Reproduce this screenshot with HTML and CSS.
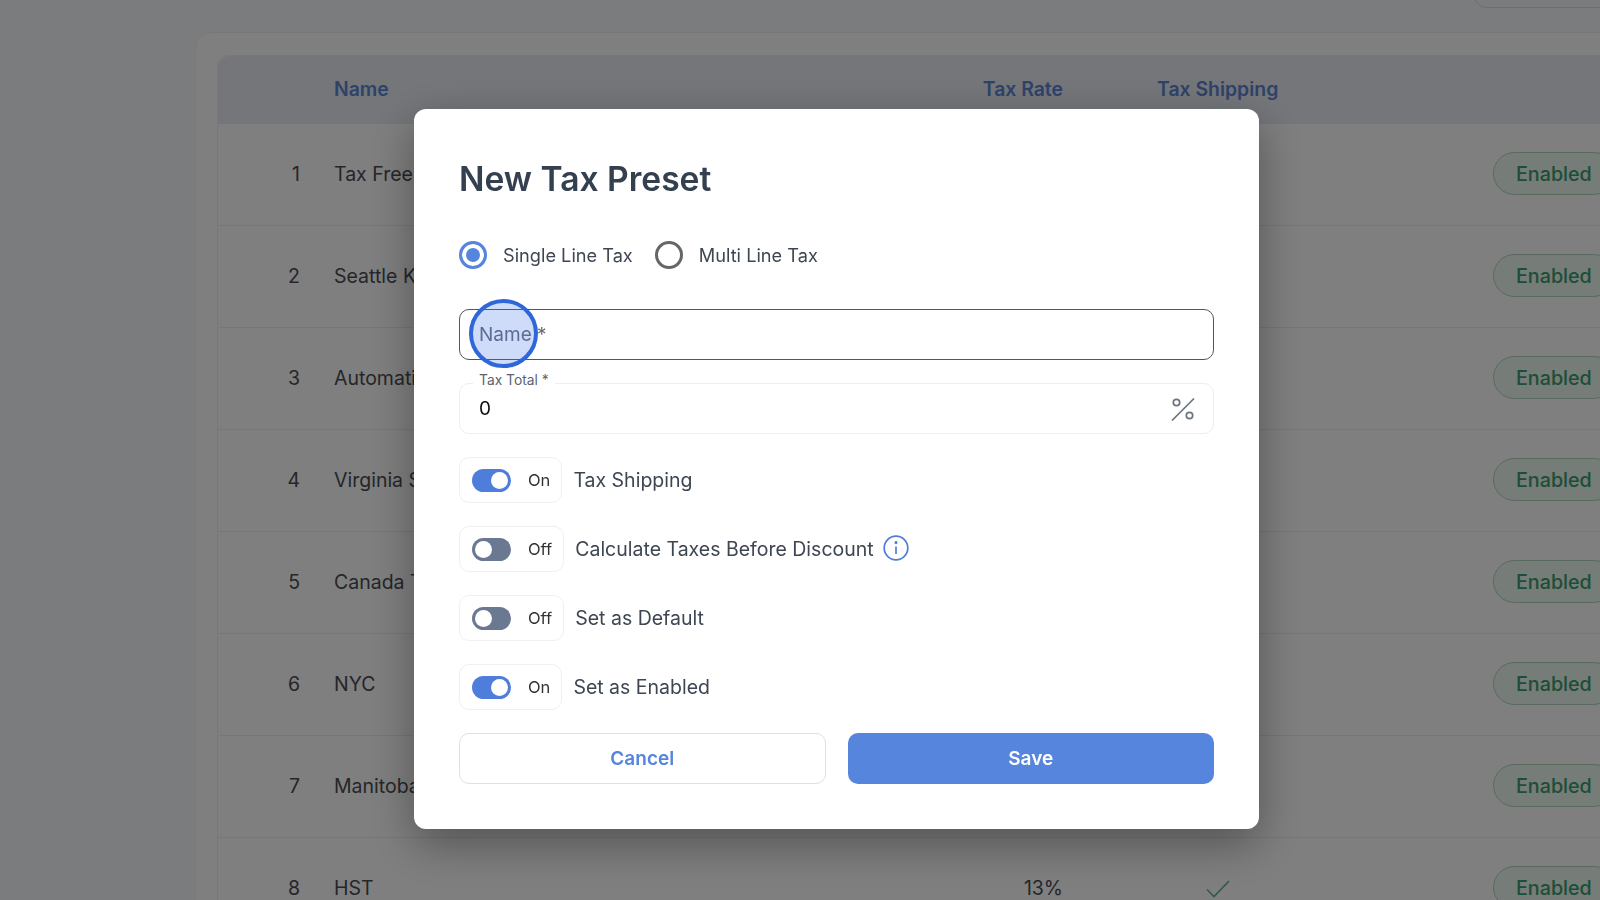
FILE: index.html
```html
<!DOCTYPE html>
<html lang="en">
<head>
    <meta charset="UTF-8">
    <title>Tax Presets</title>
    <link rel="stylesheet" href="styles.css">
</head>
<body>
    <main class="page">
        <div class="topbar"><div class="top-pill"></div></div>
        <section class="card">
            <div class="table">
                <div class="row head">
                    <div class="num"></div>
                    <div class="name">Name</div>
                    <div class="rate">Tax Rate</div>
                    <div class="ship">Tax Shipping</div>
                    <div class="status"></div>
                </div>
                <div class="row">
                    <div class="num">1</div><div class="name">Tax Free</div><div class="rate"></div><div class="ship"></div>
                    <div class="status"><span class="pill">Enabled</span></div>
                </div>
                <div class="row">
                    <div class="num">2</div><div class="name">Seattle King County</div><div class="rate"></div><div class="ship"></div>
                    <div class="status"><span class="pill">Enabled</span></div>
                </div>
                <div class="row">
                    <div class="num">3</div><div class="name">Automatic</div><div class="rate"></div><div class="ship"></div>
                    <div class="status"><span class="pill">Enabled</span></div>
                </div>
                <div class="row">
                    <div class="num">4</div><div class="name">Virginia State</div><div class="rate"></div><div class="ship"></div>
                    <div class="status"><span class="pill">Enabled</span></div>
                </div>
                <div class="row">
                    <div class="num">5</div><div class="name">Canada Tax</div><div class="rate"></div><div class="ship"></div>
                    <div class="status"><span class="pill">Enabled</span></div>
                </div>
                <div class="row">
                    <div class="num">6</div><div class="name">NYC</div><div class="rate"></div><div class="ship"></div>
                    <div class="status"><span class="pill">Enabled</span></div>
                </div>
                <div class="row">
                    <div class="num">7</div><div class="name">Manitoba</div><div class="rate"></div><div class="ship"></div>
                    <div class="status"><span class="pill">Enabled</span></div>
                </div>
                <div class="row">
                    <div class="num">8</div><div class="name">HST</div><div class="rate">13%</div>
                    <div class="ship">
                        <svg class="check" width="24" height="18" viewBox="0 0 24 18" fill="none"><path d="M1 9.5 L8 16.5 L23 1" stroke="#5fb58a" stroke-width="1.6"/></svg>
                    </div>
                    <div class="status"><span class="pill">Enabled</span></div>
                </div>
            </div>
        </section>
    </main>

    <div class="overlay">
        <div class="modal">
            <h2 class="modal-title">New Tax Preset</h2>

            <div class="radios">
                <label class="radio-item"><span class="radio checked"></span>Single Line Tax</label>
                <label class="radio-item"><span class="radio"></span>Multi Line Tax</label>
            </div>

            <div class="field">
                <input class="text-input active" type="text" placeholder="Name *">
                <span class="click-mark"></span>
            </div>

            <div class="field">
                <span class="float-label">Tax Total *</span>
                <input class="text-input" type="text" value="0">
                <svg class="percent" width="26" height="26" viewBox="0 0 26 26" fill="none" stroke="#6b7482" stroke-width="1.7">
                    <path d="M2 24.5 L24 2.5"/>
                    <circle cx="6.5" cy="6.5" r="3.2"/>
                    <circle cx="19.5" cy="19.5" r="3.2"/>
                </svg>
            </div>

            <div class="toggle-row">
                <div class="toggle-box"><span class="switch on"></span><span class="state">On</span></div>
                <span class="toggle-label">Tax Shipping</span>
            </div>
            <div class="toggle-row">
                <div class="toggle-box"><span class="switch"></span><span class="state">Off</span></div>
                <span class="toggle-label">Calculate Taxes Before Discount</span>
                <svg class="info" width="26" height="26" viewBox="0 0 26 26" fill="none" stroke="#4e7ddb" stroke-width="1.7">
                    <circle cx="13" cy="13" r="11.8"/>
                    <path d="M13 11.5 V19"/>
                    <circle cx="13" cy="7.6" r="0.7" fill="#4e7ddb"/>
                </svg>
            </div>
            <div class="toggle-row">
                <div class="toggle-box"><span class="switch"></span><span class="state">Off</span></div>
                <span class="toggle-label">Set as Default</span>
            </div>
            <div class="toggle-row">
                <div class="toggle-box"><span class="switch on"></span><span class="state">On</span></div>
                <span class="toggle-label">Set as Enabled</span>
            </div>

            <div class="actions">
                <button class="btn btn-cancel">Cancel</button>
                <button class="btn btn-save">Save</button>
            </div>
        </div>
    </div>
</body>
</html>
```

FILE: styles.css
```css
:root {
    --primary-color: #5585dc;
    --text-color: #3d4652;
}

* {
    box-sizing: border-box;
}

html, body {
    height: 100%;
}

body {
    margin: 0;
    overflow: hidden;
    background: #f6f8fb;
    font-family: Inter, "Liberation Sans", sans-serif;
    color: #4a4d52;
}

/* page behind the dialog */
.page {
    margin-left: 195px;
    width: 1600px;
}

.topbar {
    height: 32px;
    overflow: hidden;
}

.top-pill {
    width: 200px;
    height: 30px;
    margin: -22px 0 0 1278px;
    border: 1px solid #d8dbe0;
    border-radius: 14px;
}

.card {
    padding: 22px 21px 0;
    background: #fff;
    border: 1px solid #f0f1f3;
    border-radius: 16px;
}

.table {
    width: 1500px;
    border: 1px solid #f0f1f3;
    border-radius: 12px 12px 0 0;
}

.row {
    display: grid;
    grid-template-columns: 82px 663px 100px 216px 400px;
    align-items: center;
    height: 102px;
    padding-bottom: 2px;
    font-size: 19.5px;
    white-space: nowrap;
    border-bottom: 1px solid #eceef1;
}

.row.head {
    height: 68px;
    background: #e8edf5;
    border-bottom: none;
    border-radius: 12px 12px 0 0;
    font-size: 19.4px;
    font-weight: 600;
    color: #5d86d2;
}

.num {
    text-align: right;
}

.name {
    padding-left: 34px;
}

.rate {
    text-align: right;
}

.ship {
    padding-left: 94px;
}

.check {
    display: block;
    margin: 2px 0 0 49px;
}

.status {
    padding-left: 214px;
}

.pill {
    display: inline-flex;
    align-items: center;
    height: 43px;
    padding: 0 22px;
    border: 1px solid #b0d4bc;
    border-radius: 22px;
    background: #ecf8ee;
    color: #3a9c70;
    font-size: 19.7px;
    font-weight: 500;
}

/* dialog */
.overlay {
    position: fixed;
    top: 0;
    left: 0;
    right: 0;
    bottom: 0;
    padding: 109px 0 0 414px;
    background: rgba(0, 0, 0, 0.5);
}

.modal {
    width: 845px;
    height: 720px;
    padding: 45px;
    background: #fff;
    border-radius: 12px;
    box-shadow: 0 15px 45px rgba(0, 0, 0, 0.35);
}

.modal-title {
    margin: 0 0 37px;
    font-size: 33.6px;
    line-height: 50px;
    font-weight: 600;
    color: #344050;
}

.radios {
    display: flex;
    gap: 22px;
    margin-bottom: 40px;
    font-size: 18.2px;
    color: var(--text-color);
}

.radio-item {
    display: flex;
    align-items: center;
    gap: 16px;
    height: 28px;
}

.radio {
    display: block;
    width: 28px;
    height: 28px;
    border: 3px solid #666;
    border-radius: 50%;
    background: #fff;
}

.radio.checked {
    border-color: var(--primary-color);
    background: var(--primary-color);
    box-shadow: inset 0 0 0 4px #fff;
}

.field {
    position: relative;
    margin-bottom: 23px;
}

.text-input {
    display: block;
    width: 100%;
    height: 51px;
    padding: 0 19px;
    border: 1px solid #eceef1;
    border-radius: 10px;
    outline: none;
    background: #fff;
    font-family: inherit;
    font-size: 19px;
    color: #111;
}

.text-input.active {
    border-color: #555;
}

.text-input::placeholder {
    color: #666c75;
    opacity: 1;
}

.click-mark {
    position: absolute;
    top: -10px;
    left: 10px;
    width: 69px;
    height: 69px;
    border: 4px solid #2f66d8;
    border-radius: 50%;
    background: rgba(60, 110, 230, 0.25);
}

.float-label {
    position: absolute;
    top: -12px;
    left: 14px;
    padding: 0 6px;
    background: #fff;
    font-size: 13.8px;
    line-height: 18px;
    color: #5b6470;
}

.percent {
    position: absolute;
    top: 13px;
    right: 18px;
}

.toggle-row {
    display: flex;
    align-items: center;
    gap: 11px;
    height: 46px;
    margin-bottom: 23px;
    font-size: 19.5px;
    color: var(--text-color);
}

.toggle-box {
    display: flex;
    align-items: center;
    gap: 17px;
    height: 46px;
    padding: 0 11px 0 12px;
    border: 1px solid #eef0f3;
    border-radius: 10px;
}

.state {
    font-size: 16.5px;
    color: #333;
}

.switch {
    display: flex;
    align-items: center;
    width: 39px;
    height: 23px;
    padding: 0 3px;
    border-radius: 12px;
    background: #6b7892;
}

.switch::after {
    content: "";
    width: 17px;
    height: 17px;
    border-radius: 50%;
    background: #fff;
}

.switch.on {
    justify-content: flex-end;
    background: #4e7ddb;
}

.info {
    margin: -2px 0 0 -2px;
}

.actions {
    display: grid;
    grid-template-columns: 1fr 1fr;
    gap: 22px;
}

.btn {
    height: 51px;
    border-radius: 10px;
    font-family: inherit;
    font-size: 19px;
    font-weight: 600;
}

.btn-cancel {
    background: #fff;
    border: 1px solid #dde1e6;
    color: var(--primary-color);
}

.btn-save {
    background: var(--primary-color);
    border: none;
    color: #fff;
}
```
